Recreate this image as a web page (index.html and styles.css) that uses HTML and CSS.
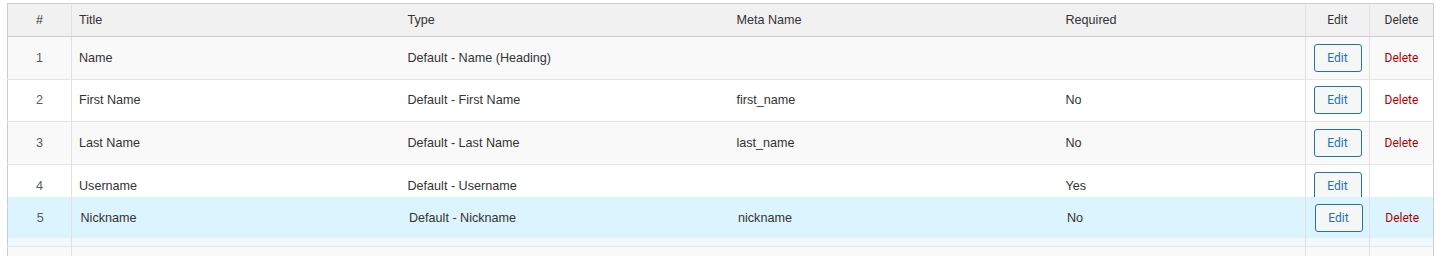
FILE: index.html
```html
<!DOCTYPE html>
<html lang="en">
<head>
<meta charset="utf-8">
<title>Fields</title>
<link rel="stylesheet" href="styles.css">
</head>
<body>
<div class="wrap">
  <table class="fields">
    <colgroup>
      <col class="c-num"><col class="c-title"><col class="c-type"><col class="c-meta"><col class="c-req"><col class="c-edit"><col class="c-del">
    </colgroup>
    <thead>
      <tr>
        <th class="num">#</th>
        <th>Title</th>
        <th>Type</th>
        <th>Meta Name</th>
        <th>Required</th>
        <th class="act">Edit</th>
        <th class="act del-col">Delete</th>
      </tr>
    </thead>
    <tbody>
      <tr class="odd">
        <td class="num">1</td>
        <td>Name</td>
        <td>Default - Name (Heading)</td>
        <td></td>
        <td></td>
        <td class="act"><span class="btn">Edit</span></td>
        <td class="act del-col"><a class="del">Delete</a></td>
      </tr>
      <tr>
        <td class="num">2</td>
        <td>First Name</td>
        <td>Default - First Name</td>
        <td>first_name</td>
        <td>No</td>
        <td class="act"><span class="btn">Edit</span></td>
        <td class="act del-col"><a class="del">Delete</a></td>
      </tr>
      <tr class="odd">
        <td class="num">3</td>
        <td>Last Name</td>
        <td>Default - Last Name</td>
        <td>last_name</td>
        <td>No</td>
        <td class="act"><span class="btn">Edit</span></td>
        <td class="act del-col"><a class="del">Delete</a></td>
      </tr>
      <tr>
        <td class="num">4</td>
        <td>Username</td>
        <td>Default - Username</td>
        <td></td>
        <td>Yes</td>
        <td class="act"><span class="btn">Edit</span></td>
        <td class="act del-col"></td>
      </tr>
      <tr class="placeholder">
        <td class="num"></td><td></td><td></td><td></td><td></td><td class="act"></td><td class="act del-col"></td>
      </tr>
      <tr class="odd">
        <td class="num"></td><td></td><td></td><td></td><td></td><td class="act"></td><td class="act del-col"></td>
      </tr>
    </tbody>
  </table>

  <table class="fields helper">
    <colgroup>
      <col class="h-num"><col class="c-title"><col class="c-type"><col class="c-meta"><col class="c-req"><col class="c-edit"><col class="c-del">
    </colgroup>
    <tbody>
      <tr>
        <td class="num">5</td>
        <td>Nickname</td>
        <td>Default - Nickname</td>
        <td>nickname</td>
        <td>No</td>
        <td class="act"><span class="btn">Edit</span></td>
        <td class="act del-col"><a class="del">Delete</a></td>
      </tr>
    </tbody>
  </table>
</div>
</body>
</html>
```
FILE: styles.css
```css
html {
  overflow: hidden;
}

body {
  margin: 0;
  background: #ffffff;
  font-family: "Liberation Sans", Arial, sans-serif;
  font-size: 12.6px;
  color: #333333;
}

.wrap {
  position: relative;
  margin: 3px 0 0 7px;
  width: 1427px;
}

.fields {
  width: 1427px;
  border-collapse: collapse;
  table-layout: fixed;
  border: 1px solid #cccccc;
}

.c-num { width: 64px; }
.h-num { width: 63px; }
.c-title, .c-type, .c-meta { width: 329px; }
.c-req { width: 247px; }
.c-edit, .c-del { width: 64px; }

.fields th {
  background: #f1f1f1;
  height: 31px;
  padding: 0 7px 1px;
  font-weight: normal;
  text-align: left;
  border-bottom: 1px solid #cccccc;
  white-space: nowrap;
}

.fields td {
  height: 41.6px;
  padding: 0 7px;
  border-top: 1px solid #e5e5e5;
  vertical-align: middle;
  white-space: nowrap;
}

.fields tr.odd td {
  background: #f9f9f9;
}

.fields .num {
  text-align: center;
  border-right: 1px solid #e1e1e1;
}

.fields td.num {
  color: #555b66;
}

.fields .act {
  text-align: center;
  border-left: 1px solid #e1e1e1;
  font-family: Roboto, "Noto Sans", sans-serif;
  font-size: 12px;
}

.fields .del-col {
  border-left: 1px solid #e1e1e1;
}

.fields tr.placeholder td {
  background: #f0f9fd;
  height: 39px;
}

.btn {
  display: inline-block;
  box-sizing: border-box;
  width: 48px;
  height: 28px;
  line-height: 26px;
  border: 1px solid #2271b1;
  border-radius: 3px;
  background: #f6f7f7;
  color: #2271b1;
  text-align: center;
  vertical-align: middle;
}

.del {
  color: #b20000;
  text-decoration: none;
}

.helper {
  position: absolute;
  top: 194px;
  left: 1px;
  width: 1425px;
  border: none;
}

.helper td {
  height: 41px;
  padding: 0 7px 0 9px;
  border-top: none;
  background: #dcf4fd;
}

.helper td.num {
  padding: 0 6px 0 8px;
}
```
